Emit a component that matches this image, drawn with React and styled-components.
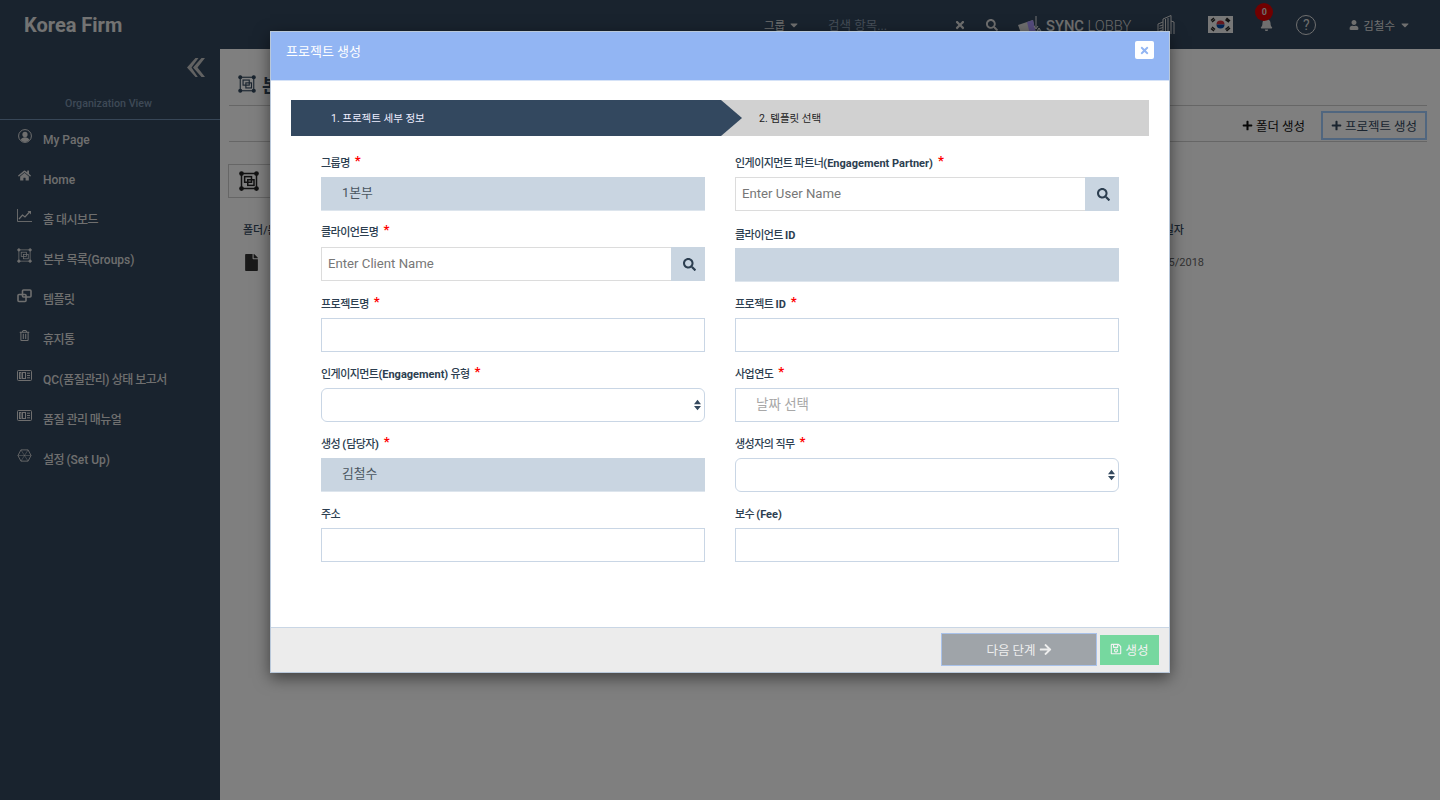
import React from "react";
import styled, { createGlobalStyle } from "styled-components";
import { FaSearch, FaTimes, FaHome, FaCaretDown, FaPlus, FaArrowRight, FaRegSave, FaFile, FaUser, FaBell, FaRegTrashAlt } from "react-icons/fa";

const Global = createGlobalStyle`
  html, body { margin: 0; padding: 0; height: 100%; background: #fff; overflow: hidden; }
  body { font-family: Roboto, "Noto Sans CJK KR", sans-serif; }
  * { box-sizing: border-box; }
`;

const Page = styled.div`width: 1440px; height: 800px; display: flex; flex-direction: column; position: relative; overflow: hidden;`;

const TopBar = styled.header`height: 49px; flex: none; background: #32465c; display: flex; align-items: center; color: #dedede;`;
const Brand = styled.div`font-size: 20px; font-weight: 700; margin-left: 24px; color: #e6e6e6;`;
const TopRight = styled.div`margin-left: auto; display: flex; align-items: center; height: 100%; padding-right: 29px;`;
const GroupMenu = styled.div`font-size: 11.5px; display: flex; align-items: center; gap: 3px; margin-right: 28px;`;
const SearchHint = styled.div`font-size: 12.5px; color: #8b9cb0; width: 126px;`;
const TopIcon = styled.span`display: inline-flex; align-items: center; justify-content: center; margin-left: ${p => p.$ml || 0}px; position: relative;`;
const Logo = styled.div`display: flex; align-items: center; margin-left: 20px; font-size: 14.7px; color: #e0e0e0; white-space: nowrap; padding-top: 2px;`;
const LogoBold = styled.span`font-weight: 500;`;
const LogoLight = styled.span`font-weight: 300; color: #d8d8d8;`;
const Badge = styled.span`position: absolute; left: -5px; top: -15px; width: 18px; height: 18px; border-radius: 50%; background: #e00000; color: #ddd; font-size: 9px; font-weight: 700; display: flex; align-items: center; justify-content: center;`;
const Help = styled.span`width: 20px; height: 20px; border: 1.5px solid #e0e0e0; border-radius: 50%; font-size: 14px; display: flex; align-items: center; justify-content: center; margin-left: 23px;`;
const UserMenu = styled.div`font-size: 11.5px; display: flex; align-items: center; gap: 4px; margin-left: 33px;`;

const Hangul = styled.span`letter-spacing: -.55px;`;
const Latin = styled.span`font-weight: ${p => p.$bold ? 700 : "inherit"};`;

const Body = styled.div`flex: 1; display: flex; min-height: 0;`;
const Sidebar = styled.aside`width: 220px; flex: none; background: #32465c; color: #dedede; display: flex; flex-direction: column;`;
const Collapse = styled.div`display: flex; justify-content: flex-end; padding: 9px 15px 0 0; color: #c4c4c4; height: 41px;`;
const OrgView = styled.div`font-size: 10.7px; font-weight: 500; color: #7c93ad; text-align: center; height: 30px; line-height: 28px; padding-right: 3px; border-bottom: 1px solid #6e8cae;`;
const NavList = styled.nav`display: flex; flex-direction: column;`;
const NavItem = styled.div`height: 40px; display: flex; align-items: center; font-size: 12px; line-height: 16px; font-weight: 500; position: relative; padding: 0 0 1px 43px;`;
const NavIcon = styled.span`position: absolute; left: 17px; top: 8px; width: 15px; height: 15px; display: flex; align-items: center; justify-content: center;`;

const Main = styled.main`flex: 1; background: #fff; padding: 0 13px 0 9px; min-width: 0; color: #222;`;
const TitleRow = styled.div`height: 57px; display: flex; align-items: center; gap: 6px; padding: 14px 0 0 9px; border-bottom: 1px solid #ccc; font-size: 18px; font-weight: 700; color: #34495e;`;
const ToolRow = styled.div`height: 36px; display: flex; align-items: flex-start; justify-content: flex-end; gap: 16px; border-bottom: 1px solid #ccc; padding-top: 5px;`;
const ToolButton = styled.button`font: inherit; font-size: 12.5px; color: #111; background: none; display: flex; align-items: center; gap: 3px; height: 29px; padding: 0; border: none; white-space: nowrap;`;
const PrimaryButton = styled(ToolButton)`color: #34495e; width: 106px; justify-content: center; border: 2px solid #a0ccff;`;
const Crumb = styled.div`margin: 22px 0 0 -1px; width: 60px; height: 34px; border: 1px solid #ccc; display: flex; align-items: center; padding-left: 10px;`;
const TableHead = styled.div`margin-top: 23px; padding: 0 243px 0 14px; display: flex; justify-content: space-between; font-size: 11px; font-weight: 500; color: #34495e;`;
const TableRow = styled.div`margin-top: 17px; padding: 0 223px 0 14px; display: flex; justify-content: space-between; align-items: center; font-size: 11px; color: #666;`;
const RowName = styled.span`display: flex; align-items: center; gap: 10px; color: #333;`;

const Overlay = styled.div`position: absolute; inset: 0; background: rgba(0,0,0,.5);`;
const Modal = styled.div`position: absolute; left: 270px; top: 31px; width: 900px; height: 642px; background: #fff; border: 1px solid #b9c8da; display: flex; flex-direction: column; box-shadow: 0 5px 15px rgba(0,0,0,.5);`;
const ModalHead = styled.div`height: 49px; flex: none; background: #92b5f3; border-bottom: 1px solid #d5e2f7; display: flex; align-items: center; justify-content: space-between; padding: 0 15px 11px; color: #fff; font-size: 13px;`;
const Close = styled.button`width: 19px; height: 18px; border: none; padding: 0; border-radius: 2px; background: #fff; color: #92b5f3; display: flex; align-items: center; justify-content: center; margin-top: -1px;`;
const ModalBody = styled.div`flex: 1; padding: 19px 20px 0;`;
const Stepper = styled.div`height: 36px; background: #d1d1d1; display: flex; font-size: 10.5px;`;
const StepActive = styled.div`width: 451px; background: #33485f; color: #eef; display: flex; align-items: center; padding: 0 0 2px 40px; clip-path: polygon(0 0, 430px 0, 100% 50%, 430px 100%, 0 100%);`;
const StepNext = styled.div`display: flex; align-items: center; padding: 0 0 2px 17px; color: #222;`;
const FormGrid = styled.div`display: grid; grid-template-columns: 384px 384px; column-gap: 30px; padding: 17px 0 0 30px; grid-template-rows: 70px 71px 70px 70px 70px 70px;`;
const Field = styled.div`display: flex; flex-direction: column;`;
const Label = styled.label`height: 24px; font-size: 11px; font-weight: 500; color: #2c3e50; white-space: nowrap; line-height: 22px; margin-top: ${p => p.$nudge || 0}px; margin-bottom: ${p => -(p.$nudge || 0) + (p.$drop || 0)}px;`;
const Star = styled.span`color: #f00; font-size: 13px; line-height: 0; margin-left: 5px; position: relative; top: -2px; font-weight: 700;`;
const inputBase = `height: 34px; width: 100%; font-family: inherit; outline: none;`;
const TextInput = styled.input`${inputBase} font-size: 13.5px; border: 1px solid #c9d6e5; background: #fff; padding: 0 20px 2px; &::placeholder { color: #a8a8a8; }`;
const ReadOnly = styled.div`${inputBase} font-size: 12.8px; background: #c9d5e1; border-bottom: 1px solid #dde5ed; padding: 0 21px 4px; display: flex; align-items: center; color: #4a5560;`;
const InputGroup = styled.div`display: flex; height: 34px;`;
const SearchInput = styled.input`flex: 1; min-width: 0; height: 34px; font-family: inherit; font-size: 13.2px; border: 1px solid #dcdcdc; border-right: none; padding: 0 6px 2px; outline: none; &::placeholder { color: #777; }`;
const Addon = styled.span`width: 34px; background: #c9d5e1; color: #2c3e50; display: flex; align-items: center; justify-content: center; padding-left: 3px;`;
const SelectBox = styled.div`position: relative; height: 34px; border: 1px solid #c9d6e5; border-radius: 6px; background: #fff;`;
const SelectArrows = styled.svg`position: absolute; right: 3px; top: 10px;`;
const ModalFoot = styled.div`height: 45px; flex: none; background: #ececec; border-top: 1px solid #c9d6e5; display: flex; justify-content: flex-end; align-items: center; padding: 0 10px 1px 0; gap: 3px;`;
const NextBtn = styled.button`width: 156px; height: 33px; background: #9fa4a9; border: 1px solid #a9c2ea; color: #eee; font: inherit; font-size: 12.5px; padding: 0 0 1px; display: flex; align-items: center; justify-content: center; gap: 3px;`;
const SaveBtn = styled.button`width: 59px; height: 30px; background: #76d89f; border: none; color: #f2f2f2; font: inherit; font-size: 12.5px; padding: 0 0 1px; display: flex; align-items: center; justify-content: center; gap: 3px;`;

const GroupIcon = ({ size = 16, sw = 1 }) => (
  <svg width={size} height={size} viewBox="0 0 16 16" fill="none" stroke="currentColor" strokeWidth={sw}>
    <rect x="2" y="2" width="12" height="12" />
    <rect x="4.500" y="4.500" width="5.500" height="4.500" />
    <rect x="7" y="7" width="5" height="4.500" />
    {[[2, 2], [14, 2], [2, 14], [14, 14]].map(([x, y]) => <circle key={x * 100 + y} cx={x} cy={y} r="1.3" fill="currentColor" />)}
  </svg>
);
const CloneIcon = () => (
  <svg width="15" height="14" viewBox="0 0 15 14" fill="none" stroke="currentColor" strokeWidth="1.6">
    <rect x="5.5" y="1" width="8.5" height="7" rx="1" />
    <rect x="1" y="5.5" width="8" height="7" rx="1" />
  </svg>
);
const CardIcon = () => (
  <svg width="15" height="11" viewBox="0 0 15 11" fill="none" stroke="currentColor" strokeWidth="1">
    <rect x=".5" y=".5" width="14" height="10" rx="1" />
    <rect x="2.5" y="2.5" width="1.5" height="6" />
    <rect x="5.5" y="2.5" width="3" height="6" />
    <path d="M10 3.2h3M10 5.5h3M10 7.8h3" />
  </svg>
);
const HexIcon = () => (
  <svg width="16" height="15" viewBox="0 0 16 15" fill="none" stroke="currentColor" strokeWidth=".9">
    <path d="M4.2 1.5h7.6L15 7.5l-3.2 6H4.2L1 7.5z" />
    <path d="M4.2 1.5 11.8 13.5M11.8 1.5 4.2 13.5M1 7.5h14" opacity=".6" />
  </svg>
);
const UserCircle = () => (
  <svg width="14" height="14" viewBox="0 0 14 14">
    <circle cx="7" cy="7" r="6.4" fill="none" stroke="currentColor" />
    <circle cx="7" cy="5.4" r="2.6" fill="currentColor" />
    <path d="M2.6 11c.8-2 2.5-2.8 4.4-2.8s3.6.8 4.4 2.8A6 6 0 0 1 7 13a6 6 0 0 1-4.4-2z" fill="currentColor" />
  </svg>
);
const ChartIcon = () => (
  <svg width="15" height="13" viewBox="0 0 15 13" fill="none" stroke="currentColor">
    <path d="M.5 0v12.5H15" strokeWidth=".9" />
    <path d="M2 10 5.5 6l2.5 2 5-5.5" strokeWidth="1.2" />
    <path d="M10.5 2H14v3.5z" fill="currentColor" stroke="none" />
  </svg>
);
const DoubleChevron = () => (
  <svg width="18" height="19" viewBox="0 0 18 19" fill="currentColor">
    <path d="M8.500 0 0 9.500 8.500 19h2.300L4.500 9.500 11.500 0z" />
    <path d="M14.500 0 6 9.500 14.500 19H18L10.500 9.500 18 0z" />
  </svg>
);
const SyncMark = () => (
  <svg width="28" height="20" viewBox="0 0 28 20">
    <path d="M0 9 15 4l3 13-14 3z" fill="#dcdcdc" />
    <path d="M9 6 15 4l3 13-6 1.500z" fill="#a996fa" />
    <path d="M18 0v12M16 10l2 3 2-3M21 21V12M19 15l2-3 2 3" fill="none" stroke="#e8e8e8" strokeWidth="1" />
  </svg>
);
const Building = () => (
  <svg width="20" height="20" viewBox="0 0 20 20" fill="none" stroke="#d8d8d8" strokeWidth="1">
    <path d="M7 19V4l8-3.500V19M15 6l3 1v12M2 19V9l5-2" />
    <path d="M3.500 11 7 10M3.500 13.500 7 12.500M3.500 16 7 15M9.500 4v15M12 3v16" />
  </svg>
);
const Flag = () => (
  <svg width="25" height="17" viewBox="0 0 25 17">
    <rect width="25" height="17" fill="#eee" />
    <path d="M8.5 8.5a4 4 0 0 1 8 0z" fill="#cd2e3a" />
    <path d="M8.5 8.5a4 4 0 0 0 8 0z" fill="#0047a0" />
    <g stroke="#222" strokeWidth="1.6">
      <path d="M3 4.5 6 2M4 6 7 3.5M18.5 2 22 5M17.5 3.5 21 6M3 12.5 6 15M4 11l3 2.5M18.5 15l3.5-3M17.5 13.5l3.5-3" />
    </g>
  </svg>
);

/* Hangul in the reference is set tighter than the Latin around it. */
const Mixed = ({ text, bold }) =>
  text.split(/([\uAC00-\uD7A3 ]*[\uAC00-\uD7A3][\uAC00-\uD7A3 ]*)/).filter(Boolean).map((run, i) =>
    /[\uAC00-\uD7A3]/.test(run) ? <Hangul key={i}>{run}</Hangul> : <Latin key={i} $bold={bold}>{run}</Latin>
  );

const NAV = [
  [<UserCircle />, "My Page"],
  [<FaHome size={13} />, "Home"],
  [<ChartIcon />, "홈 대시보드"],
  [<GroupIcon size={15} sw={.8} />, "본부 목록(Groups)"],
  [<CloneIcon />, "템플릿"],
  [<FaRegTrashAlt size={11} />, "휴지통"],
  [<CardIcon />, "QC(품질관리) 상태 보고서"],
  [<CardIcon />, "품질 관리 매뉴얼"],
  [<HexIcon />, "설정 (Set Up)"],
];

const Req = ({ text, req, nudge, drop }) => (
  <Label $nudge={nudge} $drop={drop}><Mixed text={text} bold />{req && <Star>*</Star>}</Label>
);
const Arrows = () => (
  <SelectArrows width="7" height="12" viewBox="0 0 8 12" fill="#34495e">
    <path d="M4 0 8 5H0zM0 7h8l-4 5z" />
  </SelectArrows>
);
const SearchField = ({ placeholder }) => (
  <InputGroup>
    <SearchInput placeholder={placeholder} />
    <Addon><FaSearch size={13} /></Addon>
  </InputGroup>
);

export default function App() {
  return (
    <Page>
      <Global />
      <TopBar>
        <Brand>Korea Firm</Brand>
        <TopRight>
          <GroupMenu>그룹 <FaCaretDown size={12} /></GroupMenu>
          <SearchHint>검색 항목...</SearchHint>
          <TopIcon><FaTimes size={12} /></TopIcon>
          <TopIcon $ml={20}><FaSearch size={12} /></TopIcon>
          <Logo><SyncMark /><span><LogoBold>SYNC</LogoBold> <LogoLight>LOBBY</LogoLight></span></Logo>
          <TopIcon $ml={25}><Building /></TopIcon>
          <TopIcon $ml={32}><Flag /></TopIcon>
          <TopIcon $ml={27}><FaBell size={13} /><Badge>0</Badge></TopIcon>
          <Help>?</Help>
          <UserMenu><FaUser size={10} /> 김철수 <FaCaretDown size={12} /></UserMenu>
        </TopRight>
      </TopBar>
      <Body>
        <Sidebar>
          <Collapse><DoubleChevron /></Collapse>
          <OrgView>Organization View</OrgView>
          <NavList>
            {NAV.map(([icon, text]) => (
              <NavItem key={text}><NavIcon>{icon}</NavIcon><span><Mixed text={text} /></span></NavItem>
            ))}
          </NavList>
        </Sidebar>
        <Main>
          <TitleRow><GroupIcon size={18} /> 본부 목록</TitleRow>
          <ToolRow>
            <ToolButton><FaPlus size={11} /> 폴더 생성</ToolButton>
            <PrimaryButton><FaPlus size={11} /> 프로젝트 생성</PrimaryButton>
          </ToolRow>
          <Crumb><GroupIcon size={20} sw={1.2} /></Crumb>
          <TableHead><span>폴더/문서</span><span>일자</span></TableHead>
          <TableRow><RowName><FaFile size={17} color="#333" />s</RowName><span>5/2018</span></TableRow>
        </Main>
      </Body>
      <Overlay />
      <Modal>
        <ModalHead>프로젝트 생성<Close><FaTimes size={11} /></Close></ModalHead>
        <ModalBody>
          <Stepper>
            <StepActive>1. 프로젝트 세부 정보</StepActive>
            <StepNext>2. 템플릿 선택</StepNext>
          </Stepper>
          <FormGrid>
            <Field><Req req text="그룹명" /><ReadOnly>1본부</ReadOnly></Field>
            <Field><Req req text="인게이지먼트 파트너(Engagement Partner)" /><SearchField placeholder="Enter User Name" /></Field>
            <Field><Req req text="클라이언트명" nudge={-1} /><SearchField placeholder="Enter Client Name" /></Field>
            <Field><Req text="클라이언트 ID" nudge={2} drop={1} /><ReadOnly /></Field>
            <Field><Req req text="프로젝트명" /><TextInput /></Field>
            <Field><Req req text="프로젝트 ID" /><TextInput /></Field>
            <Field><Req req text="인게이지먼트(Engagement) 유형" /><SelectBox><Arrows /></SelectBox></Field>
            <Field><Req req text="사업연도" /><TextInput placeholder="날짜 선택" /></Field>
            <Field><Req req text="생성 (담당자)" /><ReadOnly>김철수</ReadOnly></Field>
            <Field><Req req text="생성자의 직무" /><SelectBox><Arrows /></SelectBox></Field>
            <Field><Req text="주소" /><TextInput /></Field>
            <Field><Req text="보수 (Fee)" /><TextInput /></Field>
          </FormGrid>
        </ModalBody>
        <ModalFoot>
          <NextBtn>다음 단계 <FaArrowRight size={13} /></NextBtn>
          <SaveBtn><FaRegSave size={12} /> 생성</SaveBtn>
        </ModalFoot>
      </Modal>
    </Page>
  );
}
